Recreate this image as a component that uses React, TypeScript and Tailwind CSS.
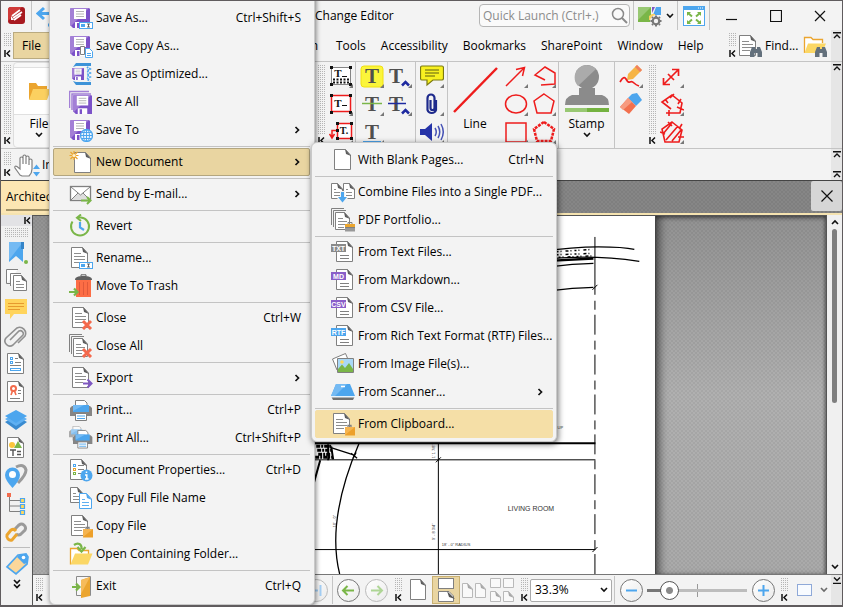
import type { ReactNode } from "react";

const GRAY = "#808080";
const BLUE = "#4da6ee";
const GREEN = "#7ab648";
const PURPLE = "#7e57c2";
const ORANGE = "#eba52f";
const RED = "#ee1c1c";

type IconProps = { children: ReactNode; w?: number; h?: number };

function Svg({ children, w = 24, h = 24 }: IconProps) {
  return (
    <svg width={w} height={h} viewBox={`0 0 ${w} ${h}`} fill="none" className="block shrink-0" aria-hidden="true">
      {children}
    </svg>
  );
}

/* ---------- shared icon parts ---------- */

function Sheet({ x = 3, y = 2, w = 16, h = 20, c = GRAY, lines = true }: { x?: number; y?: number; w?: number; h?: number; c?: string; lines?: boolean }) {
  const r = x + w;
  const b = y + h;
  return (
    <g>
      <path d={`M${x + 0.5} ${y + 0.5}H${r - 5.5}L${r - 0.5} ${y + 6}V${b - 0.5}H${x + 0.5}Z`} fill="#fff" stroke={c} strokeLinejoin="round" />
      <path d={`M${r - 6} ${y}L${r} ${y + 7}L${r - 5} ${y + 5}Z`} fill={c === GRAY ? "#5c5c5c" : c} />
      {lines && (
        <path d={`M${x + 3} ${y + 6.5}H${r - 7}M${x + 3} ${y + 9.5}H${r - 3}M${x + 3} ${y + 12.5}H${r - 3}M${x + 3} ${y + 15.5}H${r - 6}`} stroke={c} strokeWidth=".9" />
      )}
    </g>
  );
}

function Floppy({ x = 1, y = 2, s = 20 }: { x?: number; y?: number; s?: number }) {
  const k = s / 20;
  return (
    <g transform={`translate(${x} ${y}) scale(${k})`}>
      <path d="M1 0H19L20 1V20H3L0 17V1Z" fill="#7c52c8" />
      <path d="M1 0H19L1 18L0 17V1Z" fill="#a380d6" />
      <rect x="4" y="1" width="12" height="10" fill="#fff" />
      <path d="M6 3.5H14M6 6H14M6 8.500H14" stroke="#b5b5b5" />
      <rect x="5" y="14" width="10" height="6" fill="#fff" />
      <rect x="7" y="15" width="2.500" height="5" fill="#7c52c8" />
    </g>
  );
}

function Rename({ y = 16 }: { y?: number }) {
  return (
    <g>
      <rect x="10.500" y={y + 0.5} width="13" height="6" fill="#fff" stroke={BLUE} />
      <rect x="12" y={y + 2} width="4" height="3" fill={BLUE} />
      <path d={`M18 ${y + 2}h3M19.500 ${y + 2}v3M18 ${y + 5}h3`} stroke="#444" strokeWidth=".8" />
    </g>
  );
}

function Cross() {
  return <path d="M14 15L22 23M22 15L14 23" stroke="#f4694c" strokeWidth="3" />;
}

function Bag() {
  return (
    <g>
      <path d="M17 15.500V13.500H20V15.500" stroke={GRAY} strokeWidth="1.300" />
      <path d="M14 15H24V23.500H14Z" fill="#eda02a" />
      <path d="M14 15H24L14 23Z" fill="#f5b450" />
    </g>
  );
}

function Printer({ x = 1, y = 2, k = 1 }: { x?: number; y?: number; k?: number }) {
  return (
    <g transform={`translate(${x} ${y}) scale(${k})`}>
      <path d="M5.500 7V.5H14.500L17 3V7" fill="#fff" stroke={GRAY} />
      <path d="M0 8L2 6H20L22 8V16H0Z" fill="#858585" />
      <path d="M3 5H19V12H3Z" fill={BLUE} />
      <path d="M3 5H14L3 11Z" fill="#74baf3" />
      <path d="M5.500 13.500H16.500V20.500H5.500Z" fill="#fff" stroke={GRAY} />
      <path d="M7 16H15M7 18.500H15" stroke={BLUE} />
    </g>
  );
}

function Tag({ text, color }: { text: string; color: string }) {
  return (
    <Svg>
      <Sheet x={5} y={1} w={17} h={21} lines={false} />
      <path d="M9 15.500H18M9 18.500H18" stroke={GRAY} />
      <rect x="0" y="4" width="15" height="8" fill={color} />
      <text x="7.500" y="10.700" textAnchor="middle" fontSize="7" fontWeight="700" fill="#fff" fontFamily="Liberation Sans, sans-serif">
        {text}
      </text>
    </Svg>
  );
}

/* ---------- file menu icons ---------- */

const menuIcons: Record<string, ReactNode> = {
  save: <Svg><Floppy /></Svg>,
  saveAs: <Svg><Floppy /><Rename /></Svg>,
  saveCopy: (
    <Svg>
      <Floppy />
      <path d="M11.500 12.500H15.500V20.500H11.500Z" fill="#fff" stroke={GRAY} />
      <path d="M16.500 14.500H20.500L23.500 17.500V23.500H16.500Z" fill="#fff" stroke={BLUE} />
      <path d="M18 19.500H22M18 21.500H22" stroke={BLUE} />
    </Svg>
  ),
  saveOpt: (
    <Svg>
      <path d="M4 5L7 1H22V4H7Z" fill="#3d93d8" />
      <path d="M4 19L7 23H22V20H7Z" fill="#3d93d8" />
      <path d="M18 5L21 7L18 9L21 11L18 13L21 15L18 17L21 19" stroke={BLUE} strokeWidth="2" strokeDasharray="1.500 1" />
      <Floppy x={3} y={6} s={12} />
    </Svg>
  ),
  saveAll: (
    <Svg>
      <path d="M.5 18V1.500H20M3 20V4H22" stroke="#a380d6" strokeWidth="1.500" />
      <Floppy x={4} y={5} s={19} />
    </Svg>
  ),
  saveTo: (
    <Svg>
      <Floppy />
      <circle cx="17.500" cy="17.500" r="6" fill="#e8f4fd" stroke={BLUE} strokeWidth="1.300" />
      <path d="M11.500 17.500H23.500M17.500 11.500V23.500M12.500 14.500H22.500M12.500 20.500H22.500" stroke={BLUE} />
      <ellipse cx="17.500" cy="17.500" rx="3" ry="6" stroke={BLUE} />
    </Svg>
  ),
  newDoc: (
    <Svg>
      <Sheet x={5} y={2} w={17} h={21} lines={false} />
      <path d="M5 1V10M.5 5.500H9.500M1.500 2L8.500 9M8.500 2L1.500 9" stroke={ORANGE} strokeWidth="1.200" />
      <circle cx="5" cy="5.500" r="1.600" fill="#fff2cf" />
    </Svg>
  ),
  mail: (
    <Svg>
      <rect x="1.500" y="4.500" width="20" height="14" fill="#fff" stroke={GRAY} strokeWidth="1.300" />
      <path d="M2 18L9 11L11.500 13L14 11L21 18Z" fill="#ddd" />
      <path d="M2 5L11.500 13L21 5M2 18L9 11M21 18L14 11" stroke={GRAY} />
      <path d="M12 18.500H21M18 15L21.500 18.500L18 22" stroke={GREEN} strokeWidth="2" />
    </Svg>
  ),
  revert: (
    <Svg>
      <path d="M3.500 7.500A9 9 0 1 0 12 3.500H9" stroke={GREEN} strokeWidth="2" />
      <path d="M12 .5L8 3.800L12 7" stroke={GREEN} strokeWidth="2" />
      <path d="M11 8V13.500L15 16" stroke={BLUE} strokeWidth="2.200" />
    </Svg>
  ),
  rename: <Svg><Sheet x={2} y={1} w={17} h={21} /><Rename y={16} /></Svg>,
  trash: (
    <Svg>
      <path d="M7 6H22V23H7Z" fill="#fc6d45" />
      <path d="M10.500 8V21M14.500 8V21M18.500 8V21" stroke="#e0593a" />
      <path d="M6 6C6 3 9 2 14.500 2S23 3 23 6Z" fill="#5f5f5f" />
      <path d="M12 2V.8H17V2" stroke="#5f5f5f" />
      <path d="M0 18H8M5 14.500L8.500 18L5 21.500" stroke={GREEN} strokeWidth="2.200" />
    </Svg>
  ),
  close: <Svg><Sheet x={3} y={1} w={17} h={21} /><Cross /></Svg>,
  closeAll: (
    <Svg>
      <path d="M.5 18V.5H13M2.500 20V2.500H15" stroke={GRAY} />
      <Sheet x={4} y={4} w={15} h={19} />
      <Cross />
    </Svg>
  ),
  export: (
    <Svg>
      <Sheet x={3} y={1} w={17} h={21} />
      <path d="M14 17.500H22M18.500 13.500L22.500 17.500L18.500 21.500" stroke={PURPLE} strokeWidth="2" />
    </Svg>
  ),
  print: <Svg><Printer /></Svg>,
  printAll: (
    <Svg>
      <g opacity=".65"><Printer x={0} y={0} k={0.7} /></g>
      <Printer x={4} y={4} k={0.88} />
    </Svg>
  ),
  props: (
    <Svg>
      <Sheet x={1} y={1} w={17} h={21} lines={false} />
      <path d="M9 7.500H15M9 11.500H15M9 15.500H12" stroke={GRAY} />
      <rect x="4.500" y="6.500" width="2" height="2" stroke={BLUE} />
      <rect x="4.500" y="10.500" width="2" height="2" stroke={ORANGE} />
      <rect x="4.500" y="14.500" width="2" height="2" stroke={GREEN} />
      <circle cx="17.500" cy="17.500" r="6" fill={BLUE} />
      <path d="M17.500 13.500V15M16 17H17.800V21M16 21H19.500" stroke="#fff" strokeWidth="1.500" />
    </Svg>
  ),
  copyName: <Svg><Sheet x={1} y={1} w={13} h={16} /><Sheet x={10} y={7} w={13} h={16} c={BLUE} /></Svg>,
  copyFile: <Svg><Sheet x={2} y={1} w={17} h={21} /><Bag /></Svg>,
  folder: (
    <Svg>
      <path d="M1.500 22.500V6.500H8L10 8.500H19.500V13" fill="#fff" stroke={ORANGE} strokeWidth="1.300" />
      <path d="M1.500 22.500L6 11.500H23.500L19 22.500Z" fill="#fbd765" />
      <path d="M5 3C9 0 13 2 12.500 7M8.500 5L12.500 9.500L16.500 5" stroke={GREEN} strokeWidth="2.200" />
    </Svg>
  ),
  exit: (
    <Svg>
      <path d="M7.500 2.500H21.500V21.500H7.500Z" fill="#f7f7f7" stroke="#8a8a8a" />
      <path d="M12 6L21 3V22L12 24Z" fill={ORANGE} />
      <path d="M12 6L21 3L12 20Z" fill="#f6bb5a" />
      <path d="M3 13H9M7 9.500L10.500 13L7 16.500" stroke={GREEN} strokeWidth="2.200" />
    </Svg>
  ),
  blank: <Svg><Sheet x={3} y={1} w={17} h={21} lines={false} /></Svg>,
  combine: (
    <Svg>
      <Sheet x={0} y={3} w={12} h={16} />
      <Sheet x={12} y={3} w={12} h={16} />
      <path d="M11.500 11V21M8 17L11.500 20.800L15 17" stroke="#f3f3f3" strokeWidth="5" />
      <path d="M11.500 12V20" stroke={BLUE} strokeWidth="3" />
      <path d="M7 17H16L11.500 22.500Z" fill={BLUE} />
    </Svg>
  ),
  portfolio: (
    <Svg>
      <path d="M.5 17V.5H13M2.500 19V2.500H15" stroke={GRAY} />
      <Sheet x={4} y={4} w={15} h={18} />
      <rect x="14" y="16" width="10" height="7" fill={ORANGE} />
      <path d="M17 16V14.500H21V16M14 19.500H24" stroke={GRAY} />
      <rect x="14" y="20" width="10" height="3.500" fill="#999" />
    </Svg>
  ),
  txt: <Tag text="TXT" color="#8a8a8a" />,
  md: <Tag text="MD" color="#8a5fc9" />,
  csv: <Tag text="CSV" color="#8a5fc9" />,
  rtf: <Tag text="RTF" color="#4da6ee" />,
  image: (
    <Svg>
      <path d="M1.500 7L14.500 1.500L19 12L6 18Z" fill="#fff" stroke={GRAY} />
      <path d="M6.500 6.500H22.500V20.500H6.500Z" fill="#a9d8f7" stroke={GRAY} />
      <path d="M7 20V17L11 12.500L14 16L18 11L22 17V20Z" fill={GREEN} />
      <circle cx="11" cy="10" r="1.800" fill="#ffd95c" />
    </Svg>
  ),
  scanner: (
    <Svg>
      <path d="M5 4H19L24 16H0Z" fill={BLUE} />
      <path d="M5 4H16L4 16H0Z" fill="#74baf3" />
      <path d="M0 16H24L22 20H2Z" fill="#707070" />
      <path d="M0 16H24V17.500H0Z" fill="#e8f4fd" />
      <path d="M10 6.500H14" stroke="#fff" strokeWidth="1.500" />
    </Svg>
  ),
  clipboard: <Svg><Sheet x={2} y={1} w={17} h={21} /><Bag /></Svg>,
};

/* ---------- small marks ---------- */

function Pin() {
  return (
    <Svg w={7} h={7}>
      <path d="M1 0V7M6 .5L3 3.500L6 6.500" stroke="#111" strokeWidth="1.500" />
    </Svg>
  );
}

function Grip() {
  return (
    <div className="flex w-3 shrink-0 flex-col items-center gap-[3px] pt-[3px] pb-1">
      <div className="w-[9px] flex-1 bg-[conic-gradient(#b5b5b5_25%,transparent_0)] bg-[length:2px_2px]" />
      <Pin />
    </div>
  );
}

function More({ flip = false }: { flip?: boolean }) {
  return (
    <button aria-label="More" className="flex w-[11px] justify-center">
      <Svg w={8} h={7}>
        {flip ? <path d="M0 6.500H8M1 .5L4 3.500L7 .5" stroke="#111" strokeWidth="1.400" /> : <path d="M0 .7H8M1 6L4 3L7 6" stroke="#111" strokeWidth="1.400" />}
      </Svg>
    </button>
  );
}

function Overflow({ children }: { children?: ReactNode }) {
  return <div className="flex w-[11px] shrink-0 flex-col bg-[#e6e6e6] py-0.5">{children}</div>;
}

function Down() {
  return (
    <Svg w={8} h={6}>
      <path d="M1 1L4 4L7 1" stroke="#111" strokeWidth="1.600" />
    </Svg>
  );
}

function Rule() {
  return <div className="w-px shrink-0 self-stretch bg-[#c4c4c4]" />;
}

/* ---------- menus ---------- */

type Entry = { icon: string; label?: string; keys?: string; sub?: boolean; on?: boolean } | null;

const fileMenu: Entry[] = [
  { icon: "save" },
  { icon: "saveAs", label: "Save As...", keys: "Ctrl+Shift+S" },
  { icon: "saveCopy", label: "Save Copy As..." },
  { icon: "saveOpt", label: "Save as Optimized..." },
  { icon: "saveAll", label: "Save All" },
  { icon: "saveTo", label: "Save To", sub: true },
  null,
  { icon: "newDoc", label: "New Document", sub: true, on: true },
  null,
  { icon: "mail", label: "Send by E-mail...", sub: true },
  null,
  { icon: "revert", label: "Revert" },
  null,
  { icon: "rename", label: "Rename..." },
  { icon: "trash", label: "Move To Trash" },
  null,
  { icon: "close", label: "Close", keys: "Ctrl+W" },
  { icon: "closeAll", label: "Close All" },
  null,
  { icon: "export", label: "Export", sub: true },
  null,
  { icon: "print", label: "Print...", keys: "Ctrl+P" },
  { icon: "printAll", label: "Print All...", keys: "Ctrl+Shift+P" },
  null,
  { icon: "props", label: "Document Properties...", keys: "Ctrl+D" },
  { icon: "copyName", label: "Copy Full File Name" },
  { icon: "copyFile", label: "Copy File" },
  { icon: "folder", label: "Open Containing Folder..." },
  null,
  { icon: "exit", label: "Exit", keys: "Ctrl+Q" },
];

const newMenu: Entry[] = [
  { icon: "blank", label: "With Blank Pages...", keys: "Ctrl+N" },
  null,
  { icon: "combine", label: "Combine Files into a Single PDF..." },
  { icon: "portfolio", label: "PDF Portfolio..." },
  null,
  { icon: "txt", label: "From Text Files..." },
  { icon: "md", label: "From Markdown..." },
  { icon: "csv", label: "From CSV File..." },
  { icon: "rtf", label: "From Rich Text Format (RTF) Files..." },
  { icon: "image", label: "From Image File(s)..." },
  { icon: "scanner", label: "From Scanner...", sub: true },
  null,
  { icon: "clipboard", label: "From Clipboard...", on: true },
];

function MenuList({ entries, highlight }: { entries: Entry[]; highlight: string }) {
  return (
    <>
      {entries.map((e, i) =>
        e === null ? (
          <div key={i} role="separator" className="flex h-1 items-center">
            <div className="h-px w-full bg-[#c3c3c3]" />
          </div>
        ) : (
          <button
            key={i}
            role="menuitem"
            aria-label={e.label ?? "Save"}
            className={`flex h-7 w-full items-center gap-[3px] rounded-xs border pr-2 pl-[15px] text-left whitespace-nowrap ${e.on ? highlight : "border-transparent"}`}
          >
            {menuIcons[e.icon]}
            {e.label && <span className="flex-1">{e.label}</span>}
            {e.keys && <span>{e.keys}</span>}
            {e.sub && (
              <Svg w={7} h={8}>
                <path d="M1.500 1L4.500 4L1.500 7" stroke="#111" strokeWidth="1.700" />
              </Svg>
            )}
          </button>
        ),
      )}
    </>
  );
}

/* ---------- ribbon icons ---------- */

function Corner() {
  return <path d="M24 20V24H20Z" fill="#777" />;
}

function LetterT({ x = 12, y = 19, size = 21 }: { x?: number; y?: number; size?: number }) {
  return (
    <text x={x} y={y} textAnchor="middle" fontSize={size} fontWeight="700" fill="#4f4f4f" fontFamily="Liberation Serif, serif">
      T
    </text>
  );
}

const handles = <path d="M1 2h3v3h-3zM20 2h3v3h-3zM1 19h3v3h-3zM20 19h3v3h-3z" fill="#111" />;

function Tool({ label, children, corner = true }: { label: string; children: ReactNode; corner?: boolean }) {
  return (
    <button aria-label={label} className="flex h-7 w-7 items-center justify-center">
      <Svg>
        {children}
        {corner && <Corner />}
      </Svg>
    </button>
  );
}

function Column({ children }: { children: ReactNode }) {
  return <div className="flex w-7 shrink-0 flex-col">{children}</div>;
}

function Ribbon() {
  return (
    <div className="flex h-[87px] overflow-hidden border-b border-[#c4c4c4]">
      <div className="flex w-[314px] shrink-0">
        <Grip />
        <button className="flex w-[52px] flex-col items-center rounded-sm border border-[#ddd] bg-white/40">
          <span className="mt-1 flex h-12 w-full items-center justify-center border-y border-[#e0e0e0] bg-white">
            <Svg>
              <path d="M2 20V4H9L11 7H20V20Z" fill="#eba52f" />
              <path d="M2 21L6 10H24L20 21Z" fill="#fbd060" />
            </Svg>
          </span>
          <span className="mt-px">File</span>
          <Down />
        </button>
      </div>
      <Grip />
      <Column>
        <Tool label="Typewriter">
          <rect x="2.500" y="3.500" width="19" height="17" fill="#fff" stroke="#111" strokeDasharray="1 1" />
          {handles}
          <text x="9" y="13" textAnchor="middle" fontSize="11" fontWeight="700" fill="#111" fontFamily="Liberation Serif, serif">T</text>
          <path d="M13 12.500H18" stroke="#111" />
          <path d="M4 15.500H20M4 18.500H20" stroke="#111" strokeWidth="2" strokeDasharray="2 1.500" />
        </Tool>
        <Tool label="Text Box">
          <rect x="2.500" y="3.500" width="19" height="16" fill="#fff" stroke={RED} strokeWidth="1.500" />
          {handles}
          <text x="9" y="15" textAnchor="middle" fontSize="11" fontWeight="700" fill="#111" fontFamily="Liberation Serif, serif">T</text>
          <path d="M13 13.500H18" stroke="#111" />
        </Tool>
        <Tool label="Callout">
          <rect x="8.500" y="3.500" width="14" height="15" fill="#fff" stroke={RED} strokeWidth="1.500" />
          <path d="M7 2h3v3h-3zM21 2h3v3h-3zM7 17h3v3h-3zM21 17h3v3h-3zM7 9h3v3h-3z" fill="#111" />
          <text x="15" y="14" textAnchor="middle" fontSize="10" fontWeight="700" fill="#111" fontFamily="Liberation Serif, serif">T.</text>
          <path d="M7 10.500H3V17M.5 14L3 18L5.500 14" stroke={RED} strokeWidth="1.500" />
        </Tool>
      </Column>
      <Rule />
      <div className="flex w-[59px] shrink-0 justify-center">
        <Column>
          <Tool label="Highlight">
            <rect x="1" y="2" width="22" height="21" rx="3" fill="#fbf53a" stroke="#f0e010" />
            <LetterT />
          </Tool>
          <Tool label="Strikeout"><LetterT /><path d="M2 11.500H22" stroke={GREEN} strokeWidth="1.500" /></Tool>
          <Tool label="Underline"><LetterT /><path d="M3 22H21" stroke={BLUE} strokeWidth="2" /></Tool>
        </Column>
        <Column>
          <Tool label="Insert Text"><LetterT x={8} /><path d="M14 21.500L17.500 18L21 21.500" stroke="#1e2aa0" strokeWidth="2.500" /></Tool>
          <Tool label="Replace Text">
            <LetterT x={8} />
            <path d="M0 11.500H18" stroke="#1e2aa0" strokeWidth="1.500" />
            <path d="M14 21.500L17.500 18L21 21.500" stroke="#1e2aa0" strokeWidth="2.500" />
          </Tool>
        </Column>
      </div>
      <Rule />
      <div className="flex w-[31px] shrink-0 justify-center">
        <Column>
          <Tool label="Sticky Note">
            <path d="M2 2H22Q23.500 2 23.500 4V14Q23.500 16 22 16H13L7 21V16H2Q.5 16 .5 14V4Q.5 2 2 2Z" fill="#f8f020" stroke="#7b7a10" strokeWidth="1.200" />
            <path d="M5 6H19M5 9H19M5 12H15" stroke="#5f5f10" />
          </Tool>
          <Tool label="Attach File">
            <path d="M16 8V18A4.500 4.500 0 0 1 7.500 18V6A3.500 3.500 0 0 1 14.500 6V16A2 2 0 0 1 10.500 16V8" stroke="#1e2a8c" strokeWidth="2.200" />
          </Tool>
          <Tool label="Sound">
            <path d="M0 9H5L12 3V21L5 15H0Z" fill="#2634a8" />
            <path d="M15 8Q17.500 12 15 16M18 6Q21.500 12 18 18M21 4Q25.500 12 21 20" stroke="#4652b5" strokeWidth="1.500" />
          </Tool>
        </Column>
      </div>
      <Rule />
      <button className="flex w-[54px] shrink-0 flex-col items-center">
        <Svg w={48} h={54}>
          <path d="M3 50L46 6" stroke={RED} strokeWidth="2.500" />
        </Svg>
        Line
      </button>
      <Column>
        <Tool label="Arrow"><path d="M2 22L20 4M12 5.500L20.500 3.500L18.500 12" stroke={RED} strokeWidth="1.500" /></Tool>
        <Tool label="Oval"><ellipse cx="12" cy="12" rx="10.500" ry="9" stroke={RED} strokeWidth="1.500" /></Tool>
        <Tool label="Rectangle"><rect x="2" y="3" width="20" height="19" stroke={RED} strokeWidth="1.500" /></Tool>
      </Column>
      <Column>
        <Tool label="Polyline"><path d="M13 16L3 11L13 3L23 9V20L9 21" stroke={RED} strokeWidth="1.500" /></Tool>
        <Tool label="Polygon"><path d="M12 2L22 9L19 21H5L2 9Z" stroke={RED} strokeWidth="1.500" /></Tool>
        <Tool label="Cloud"><path d="M12 2L22 9L19 21H5L2 9Z" stroke={RED} strokeWidth="2.500" strokeDasharray="3 1" /></Tool>
      </Column>
      <Rule />
      <button className="flex w-[55px] shrink-0 flex-col items-center">
        <Svg w={46} h={54}>
          <circle cx="23" cy="15" r="12" fill="#8b8b8b" />
          <path d="M14 24A12 12 0 0 1 32 7Z" fill="#ababab" />
          <path d="M15 26H31V33H38Q45 35 45 43H1Q1 35 8 33H15Z" fill="#8b8b8b" />
          <rect x="1" y="46" width="44" height="4" fill="#74b240" />
          <rect x="1" y="46" width="22" height="4" fill="#98c873" />
        </Svg>
        <span>Stamp</span>
        <Down />
      </button>
      <Rule />
      <div className="flex w-[31px] shrink-0 justify-center">
        <Column>
          <Tool label="Pencil">
            <path d="M9 10L18 1L23 6L14 15L8 16Z" fill="#f6b445" />
            <path d="M18 1L23 6L21 8L16 3Z" fill="#f08060" />
            <path d="M1 18Q5 11 7 15T11 18T15 19T20 22" stroke={RED} strokeWidth="1.700" />
          </Tool>
          <Tool label="Eraser" corner={false}>
            <path d="M13 2L18 1L23 8L17 14L9 6Z" fill={BLUE} />
            <path d="M9 6L17 14L10 22L1 15Z" fill="#f2704e" />
            <path d="M9 6L13 10L4 18L1 15Z" fill="#f79b80" />
          </Tool>
        </Column>
      </div>
      <Grip />
      <Column>
        <Tool label="Distance"><path d="M3.500 20.500L18.500 5.500M3.500 14V20.500H10M12 5.500H18.500V12M8 10L14 16" stroke={RED} strokeWidth="1.700" /></Tool>
        <Tool label="Perimeter"><path d="M11 17L2 10L12 3L22 11L20 21L6 21M14 2L10 6M21 7L18 12M5 7L8 11M17 15L24 18M9 18V24" stroke={RED} strokeWidth="1.600" /></Tool>
        <Tool label="Area"><path d="M12 2L22 10L19 22H5L2 9ZM3 14L12 3M6 20L18 6M12 21L21 10M8 2L12 6M22 4L19 9M0 12L5 14M18 17L24 17" stroke={RED} strokeWidth="1.600" /></Tool>
      </Column>
      <div className="flex-1" />
      <Overflow><More /></Overflow>
    </div>
  );
}

/* ---------- side bar ---------- */

const panes: [string, ReactNode][] = [
  ["Bookmarks", <><path d="M5 2H19V22L12 16L5 22Z" fill={BLUE} /><path d="M5 2H19L5 20Z" fill="#74baf3" /><path d="M17 2H20V9H17Z" fill="#3585c8" /><circle cx="22" cy="22" r="2" fill={GREEN} /></>],
  ["Thumbnails", <><path d="M2.500 15.500V1.500H14M6.500 18V5.500H17M2.500 15.500H6" fill="#fff" stroke={GRAY} /><Sheet x={9} y={7} w={14} h={16} /></>],
  ["Comments", <><path d="M1 3H23V18H10L6 23V18H1Z" fill="#ffd45c" /><path d="M4 7.500H20M4 10.500H20M4 13.500H16" stroke="#e69a2e" /></>],
  ["Attachments", <path d="M6 15L15 6A3 3 0 0 1 19 10L9 20A5 5 0 0 1 2 13L13 3A6 6 0 0 1 21 11L14 18" transform="translate(0 1)" stroke="#909090" strokeWidth="1.600" />],
  ["Fields", <><Sheet x={3} y={1} w={17} h={21} lines={false} /><rect x="6.500" y="5.500" width="2" height="2" stroke={BLUE} /><rect x="6.500" y="9.500" width="2" height="2" stroke={BLUE} /><rect x="6.500" y="16.500" width="10" height="2" stroke={BLUE} /><path d="M11 6.500H14M11 10.500H17M6 13.500H17" stroke={GRAY} /></>],
  ["Signatures", <><Sheet x={3} y={1} w={17} h={21} lines={false} /><circle cx="9.500" cy="8.500" r="2.500" stroke="#f26b4c" strokeWidth="2" /><path d="M8.500 11L7 15M10.500 11L12 15" stroke="#f26b4c" strokeWidth="1.600" /><path d="M14 10.500H17M14 13.500H17M6 18.500H16" stroke={GRAY} /></>],
  ["Layers", <><path d="M12 8L23 14L12 22L1 14Z" fill="#3a8bd0" /><path d="M12 5L23 11L12 18L1 11Z" fill="#5fb0f2" /><path d="M12 2L23 8L12 15L1 8Z" fill={BLUE} /></>],
  ["Content", <><Sheet x={3} y={1} w={17} h={21} lines={false} /><circle cx="8" cy="9" r="3" fill="#fcc63c" /><path d="M14 5L18 12H10Z" fill={GREEN} /><path d="M6 14H12M9 14V20M13 15.500H17M13 18.500H17" stroke="#555" strokeWidth="1.400" /></>],
  ["Destinations", <><path d="M12 3Q20 -1 22 6Q22 11 14 19" stroke="#9a9a9a" strokeWidth="3" /><path d="M8.500 24Q1 16 1 11A7.500 7.500 0 0 1 16 11Q16 16 8.500 24Z" fill={BLUE} /><circle cx="8.500" cy="10.500" r="3.500" fill="#fff" /></>],
  ["Tags", <><path d="M5.500 5V19.500H17M5.500 8.500H17M5.500 14H17" stroke={GRAY} /><rect x="3" y="1" width="4" height="4" fill="#f26b4c" /><path d="M16.500 6.500h4v4h-4zM16.500 12.500h4v4h-4zM16.500 18.500h4v4h-4z" fill="#ffd95c" stroke={BLUE} strokeWidth="1.200" /></>],
  ["Links", <><path d="M11 9L15 5A4 4 0 0 1 21 10L17 14A4 4 0 0 1 12 14" stroke="#9a9a9a" strokeWidth="3" /><path d="M13 14L8 20A4 4 0 0 1 3 15L7 10A4 4 0 0 1 12 11" stroke="#eba52f" strokeWidth="3" /></>],
];

function SideBar() {
  return (
    <div className="flex w-8 shrink-0 flex-col border-r border-[#555] bg-[#f1f1f1]">
      <div className="flex h-[11px] items-center justify-end bg-[#e2e2e5] pr-px">
        <Pin />
      </div>
      <div className="mx-auto mt-0.5 h-[9px] w-[25px] bg-[conic-gradient(#b5b5b5_25%,transparent_0)] bg-[length:2px_2px]" />
      <div className="mt-px flex flex-col pr-px">
        {panes.map(([name, icon]) => (
          <button key={name} aria-label={name} className="flex h-7 items-center justify-center">
            <Svg>{icon}</Svg>
          </button>
        ))}
      </div>
      <div className="mx-0.5 mt-px h-px bg-[#bdbdbd]" />
      <button aria-label="Properties" className="mt-0.5 flex h-7 items-center justify-center">
        <Svg>
          <path d="M13 3L21 2L23 5L22 12L11 22L2 15Z" fill="#fbd79a" stroke={BLUE} strokeWidth="1.700" />
          <path d="M14 3L22 2L22 11L19 12L12 5Z" fill={BLUE} />
          <circle cx="18.500" cy="5.500" r="1.800" fill="#fff" />
        </Svg>
      </button>
      <button aria-label="More panes" className="flex h-3 items-center justify-center">
        <Svg w={8} h={10}>
          <path d="M1 1L4 4L7 1M1 5.500L4 8.500L7 5.500" stroke="#111" strokeWidth="1.700" />
        </Svg>
      </button>
    </div>
  );
}

/* ---------- document page ---------- */

function Plan() {
  return (
    <svg width="523" height="359" viewBox="133 215 523 359" fill="none" stroke="#000" className="ml-[99px] block h-full w-[523px] shrink-0 bg-white" aria-label="Floor plan">
      <path d="M540 251Q575 246 600 246T636 248.500" strokeWidth="1.200" />
      <path d="M540 259Q590 253 641 260.500" strokeWidth="1.200" />
      <path d="M550 260L595 257.500" strokeWidth="2.500" />
      <path d="M550 266Q575 263 595 262.500M550 290Q575 287 595 286.500" strokeWidth="1.300" />
      <path d="M554 251L594 248.500M554 254L594 252.500M556 256.500L594 255" strokeWidth="1.500" strokeDasharray="1 3 2 2 1 4 3 2" />
      <path d="M594 289L599 284M594 552L599 547M437 462L442 457" />
      <path d="M596.500 236V294" />
      <path d="M596.500 300V574" strokeDasharray="9 5 20 6" />
      <path d="M300 443H597" strokeWidth="2" />
      <path d="M300 459.500H597M300 549.500H597M439.500 443V574" />
      <path d="M360 443Q327 520 340.500 574" strokeWidth="1.300" />
      <path d="M331 447L356 455M352 453L358 458M357 452L354 458" strokeWidth="1.300" />
      <path d="M317 446H332M318 450H333M319 454H331M316 457H333" strokeWidth="3" strokeDasharray="4 1 2 1" />
      <path d="M329 444V460M321 460L314 485M332 446L334 459" strokeWidth="2" />
      <g stroke="none" fill="#333" fontFamily="Liberation Sans, sans-serif">
        <text x="509" y="511" fontSize="7">LIVING ROOM</text>
        <text x="443" y="546" fontSize="4">18' - 0" RADIUS</text>
        <text x="559" y="429" fontSize="4">UP</text>
        <text transform="translate(337 527) rotate(-90)" fontSize="4">10' - 0"</text>
        <text transform="translate(436 540) rotate(-90)" fontSize="4">9' - 8 3/4"</text>
        <text transform="translate(436 458) rotate(-90)" fontSize="4">1' 1 7/8"</text>
      </g>
    </svg>
  );
}

function RoundButton({ label, children, faint = false }: { label: string; children: ReactNode; faint?: boolean }) {
  return (
    <button aria-label={label} className={`flex size-[23px] shrink-0 items-center justify-center rounded-full border bg-gradient-to-br from-white to-[#ebebeb] ${faint ? "border-[#bbb]" : "border-[#777]"}`}>
      <Svg w={15} h={15}>{children}</Svg>
    </button>
  );
}

function StatusBar() {
  return (
    <div className="flex h-[31px] shrink-0 border-t border-[#777] bg-[#f3f3f3]">
      <div className="flex w-[272px] shrink-0"><Grip /></div>
      <div className="flex flex-1 items-center">
        <RoundButton label="Last page" faint>
          <path d="M3 7.500H9M11.500 2V13" stroke="#a5d0f5" strokeWidth="2" />
        </RoundButton>
        <div className="ml-1 h-7 w-px bg-[#c4c4c4]" />
        <div className="ml-1 flex gap-[5px]">
          <RoundButton label="Back"><path d="M2 7.500H13M6.500 3L2 7.500L6.500 12" stroke={GREEN} strokeWidth="2" /></RoundButton>
          <RoundButton label="Forward" faint><path d="M2 7.500H13M8.500 3L13 7.500L8.500 12" stroke="#aed595" strokeWidth="2" /></RoundButton>
        </div>
        <div className="ml-1 flex self-stretch"><Grip /></div>
        <button aria-label="Single page" className="flex w-7 justify-center"><Svg><Sheet x={4} y={1} w={16} h={21} lines={false} /></Svg></button>
        <button aria-label="Continuous" className="flex h-7 w-7 items-center justify-center border border-[#c9b071] bg-[#e9d5a1]">
          <Svg>
            <rect x="4.500" y=".5" width="15" height="10" fill="#fff" stroke={GRAY} />
            <path d="M4.500 23.500V13.500H15L19.500 18V23.500Z" fill="#fff" stroke={GRAY} />
            <path d="M13 13L21 21L15 19Z" fill="#555" />
          </Svg>
        </button>
        <button aria-label="Two pages" className="flex w-7 justify-center opacity-50">
          <Svg><Sheet x={0} y={5} w={11} h={15} lines={false} /><Sheet x={13} y={5} w={11} h={15} lines={false} /></Svg>
        </button>
        <button aria-label="Two pages continuous" className="flex w-7 justify-center opacity-50">
          <Svg>
            <path d="M.5 .5V9.500H10.500V.5ZM13.500 .5V9.500H23.500V.5Z" fill="#fff" stroke={GRAY} />
            <Sheet x={0} y={13} w={11} h={11} lines={false} /><Sheet x={13} y={13} w={11} h={11} lines={false} />
          </Svg>
        </button>
        <div className="ml-0.5 flex self-stretch"><Grip /></div>
        <div className="relative flex items-center">
          <select aria-label="Zoom" defaultValue="33.3%" className="h-[23px] w-[82px] appearance-none rounded-xs border border-[#aaa] bg-white px-1 text-xs">
            <option>33.3%</option>
          </select>
          <span className="pointer-events-none absolute right-1"><Down /></span>
        </div>
        <div className="ml-[2px] h-7 w-px bg-[#c4c4c4]" />
        <div className="ml-[5px] flex items-center gap-1">
          <RoundButton label="Zoom out"><path d="M2 7.500H13" stroke={BLUE} strokeWidth="2" /></RoundButton>
          <input
            type="range"
            aria-label="Zoom level"
            defaultValue={16}
            className="h-5 w-[101px] appearance-none bg-[linear-gradient(#777,#777),linear-gradient(#bdbdbd,#bdbdbd),linear-gradient(#999,#999)] bg-[length:22px_3px,100px_3px,1px_13px] bg-[position:0_center,0_center,50%_center] bg-no-repeat [&::-webkit-slider-thumb]:size-[19px] [&::-webkit-slider-thumb]:appearance-none [&::-webkit-slider-thumb]:rounded-full [&::-webkit-slider-thumb]:border [&::-webkit-slider-thumb]:border-[#555] [&::-webkit-slider-thumb]:bg-[radial-gradient(circle,#8a8a8a_3px,#fff_4px)]"
          />
          <RoundButton label="Zoom in"><path d="M2 7.500H13M7.500 2V13" stroke={BLUE} strokeWidth="2" /></RoundButton>
        </div>
        <div className="ml-[3px] flex self-stretch"><Grip /></div>
        <button aria-label="Fit" className="ml-[3px] flex w-6 justify-center">
          <Svg w={18} h={16}><rect x="1.500" y="2.500" width="14" height="11" fill="#f8fbff" stroke="#8fa9d8" /></Svg>
        </button>
        <button aria-label="Fit options" className="ml-[3px] flex opacity-60"><Down /></button>
      </div>
      <Overflow><More flip /></Overflow>
    </div>
  );
}

/* ---------- page ---------- */

const texture = "bg-[conic-gradient(#0000000d_25%,transparent_0_50%,#0000000d_0_75%,transparent_0)] bg-[length:4px_4px]";

export default function App() {
  return (
    <div className="relative flex h-screen w-full flex-col overflow-hidden border border-b-2 border-[#605c5e] bg-[#f3f3f3] font-['Open_Sans','Noto_Sans',sans-serif] text-xs text-black">
      <header className="flex h-[29px] shrink-0">
        <div className="flex w-[314px] shrink-0 items-center">
          <div className="flex w-[30px] justify-center">
            <Svg w={17} h={17}>
              <rect width="17" height="17" rx="3" fill="#a81a20" />
              <path d="M0 3Q0 0 3 0H14L0 14Z" fill="#cf3a38" />
              <path d="M4 9L12 3M5 11L14 5M6 13L13 8" stroke="#fff" strokeWidth="1.700" />
              <path d="M3 9L6 13L3 13Z" fill="#fff" />
            </Svg>
          </div>
          <Rule />
          <button aria-label="Undo" className="ml-1">
            <Svg>
              <path d="M2 9.500H15Q19 9.500 19 14V21H12M8 4L2 9.500L8 15" stroke={BLUE} strokeWidth="3" />
            </Svg>
          </button>
        </div>
        <h1 className="flex-1 self-center whitespace-nowrap">Change Editor</h1>
        <label className="my-[3px] mr-[3px] flex w-[151px] items-center rounded-sm border border-[#b5b5b5] bg-[#fafafa] pr-px">
          <input aria-label="Quick Launch" placeholder="Quick Launch (Ctrl+.)" className="w-0 flex-1 bg-transparent pl-[3px] text-xs outline-none placeholder:text-[#8c8c8c]" />
          <Svg w={17} h={17}>
            <circle cx="7" cy="7" r="5.500" stroke="#8a8a8a" strokeWidth="1.500" />
            <path d="M11 11L16 16" stroke="#8a8a8a" strokeWidth="2" />
          </Svg>
        </label>
        <Rule />
        <button aria-label="UI options" className="flex w-[43px] items-center justify-center gap-1">
          <Svg>
            <rect x="0" y="3" width="13" height="15" fill={GREEN} />
            <path d="M0 3H13L0 16Z" fill="#98c873" />
            <path d="M14 3H17L14 9Z" fill={PURPLE} />
            <path d="M18 3H23V11H15Z" fill={BLUE} />
            <path d="M11 12L14 10H17V16H11Z" fill="#fbd060" />
            <circle cx="18" cy="17" r="6" fill="#f3f3f3" />
            <circle cx="18" cy="17" r="3.300" stroke="#777" strokeWidth="2.200" />
            <path d="M18 11.500V13M18 21V22.500M12.500 17H14M22 17H23.500M14 13L15 14M21 20L22 21M14 21L15 20M21 14L22 13" stroke="#777" strokeWidth="2" />
          </Svg>
          <Down />
        </button>
        <Rule />
        <button aria-label="Full screen" className="flex w-[31px] items-center justify-center">
          <Svg w={22} h={20}>
            <rect x=".5" y=".5" width="21" height="19" fill="#fff" stroke={BLUE} />
            <rect width="22" height="4" fill={BLUE} />
            <path d="M15 2H16M17 2H18M19 2H20" stroke="#fff" />
            <path d="M4 10V6H8ZM18 10V6H14ZM4 14V18H8ZM18 14V18H14Z" fill={GREEN} />
            <path d="M5 7L9 10.500M17 7L13 10.500M5 17L9 13.500M17 17L13 13.500" stroke={GREEN} strokeWidth="2" />
          </Svg>
        </button>
        <Rule />
        <div className="flex w-[132px] items-center">
          {[
            ["Minimize", "M0 9.500H11"],
            ["Maximize", "M.5 .5H11.500V11.500H.5Z"],
            ["Close", "M1 1L11 11M11 1L1 11"],
          ].map(([name, d]) => (
            <button key={name} aria-label={name} className="flex h-full flex-1 items-center justify-center">
              <Svg w={12} h={12}><path d={d} stroke="#111" strokeWidth="1.200" /></Svg>
            </button>
          ))}
        </div>
      </header>

      <nav className="flex h-8 shrink-0 border-b border-[#c4c4c4]">
        <div className="flex w-[317px] shrink-0">
          <Grip />
          <button className="my-0.5 flex w-12 items-center border border-[#b9aa80] bg-[#e9d5a1] pl-2">File</button>
          <button className="ml-auto">Form</button>
        </div>
        <div className="ml-[18px] flex flex-1 items-center gap-[15px]">
          <button>Tools</button>
          <button>Accessibility</button>
          <button>Bookmarks</button>
          <button>SharePoint</button>
          <button>Window</button>
          <button>Help</button>
        </div>
        <Grip />
        <div className="flex items-center">
          <button className="flex w-[65px] items-center gap-[3px] whitespace-nowrap">
            <Svg>
              <Sheet x={1} y={1} w={17} h={21} />
              <path d="M12 23V18L14 13H17V15H19V13H22L24 18V23H19.500V19H16.500V23Z" fill="#63707c" />
            </Svg>
            Find...
          </button>
          <button aria-label="Find in folder" className="flex w-[28px]">
            <Svg>
              <path d="M1.500 19V3.500H8L10 5.500H19.500V9" fill="#fff" stroke={ORANGE} strokeWidth="1.300" />
              <path d="M1.500 19L5 9.500H23L19 19Z" fill="#fbd765" />
              <path d="M12 23V18L14 13H17V15H19V13H22L24 18V23H19.500V19H16.500V23Z" fill="#63707c" />
            </Svg>
          </button>
        </div>
        <Overflow><More /></Overflow>
      </nav>

      <Ribbon />

      <div className="flex h-8 shrink-0 border-b border-[#444]">
        <Grip />
        <button className="flex items-center gap-px">
          <Svg w={28}>
            <path d="M7 22L2 15Q1 12.500 4 13.500L7 16V5Q8.500 3 10 5V11V3Q11.500 1 13 3V11V4Q14.500 2 16 4V12V7Q17.500 5 19 7V16Q19 20 16 23H9Z" fill="#fff" stroke={GRAY} strokeWidth="1.200" />
            <path d="M20 16H27L23.500 11.500ZM20 19H27L23.500 23.500Z" fill={BLUE} />
          </Svg>
          Initial
        </button>
        <div className="flex-1" />
        <div className="flex w-[11px] flex-col justify-between bg-[#e6e6e6] py-0.5"><More /><More /></div>
      </div>

      <div className={`flex h-[34px] shrink-0 border-b-2 border-[#f5e3b0] bg-[#868686] ${texture}`}>
        <button className="relative w-[120px] bg-[#fce6b3] pl-[5px] text-left whitespace-nowrap">
          Architectural
          <span className="absolute bottom-0.5 left-[5px] h-0.5 w-[110px] bg-[#a39368]" />
        </button>
        <div className="flex-1" />
        <button aria-label="Close tab" className="mb-0.5 flex w-[31px] items-center justify-center rounded-xs bg-[#d6d6d6]">
          <Svg w={12} h={12}><path d="M.5 .5L11.500 11.500M11.500 .5L.5 11.500" stroke="#111" strokeWidth="1.200" /></Svg>
        </button>
      </div>

      <div className="flex min-h-0 flex-1">
        <SideBar />
        <div className="flex min-w-0 flex-1 flex-col">
          <div className="flex min-h-0 flex-1">
            <div className="flex min-w-0 flex-1 overflow-hidden border-t border-r border-[#555] bg-gradient-to-b from-[#929292] via-[#b0b0b0] to-[#aaa]">
              <main className={`flex min-w-0 flex-1 ${texture}`}>
                <Plan />
                <div className="flex-1 border-l border-[#444] shadow-[inset_8px_0_8px_-4px_#00000077,inset_0_3px_4px_-1px_#00000066,inset_-2px_0_3px_#00000044]" />
              </main>
            </div>
            <div className="flex w-[15px] shrink-0 flex-col items-center bg-[#f0f0f0] py-1">
              <span className="rotate-180"><Down /></span>
              <div className="mt-1 h-[174px] w-[5px] rounded-full bg-[#7f7f7f]" />
              <div className="flex-1" />
              <Down />
            </div>
          </div>
          <StatusBar />
        </div>
      </div>

      <div role="menu" aria-label="File" className="absolute bottom-0 left-12 w-[266px] rounded-md border border-[#c9c9c9] bg-[#f3f3f3] py-1 pr-1 pl-[3px] shadow-[1px_1px_5px_#00000080]">
        <MenuList entries={fileMenu} highlight="border-[#b3a67f] bg-[#e9d5a1]" />
      </div>
      <div role="menu" aria-label="New Document" className="absolute top-[141px] left-[310px] w-[246px] rounded-md border border-[#c9c9c9] bg-[#f3f3f3] px-[3px] py-[3px] shadow-[1px_2px_6px_#00000099]">
        <MenuList entries={newMenu} highlight="border-[#f5dfa7] bg-[#f5dfa7]" />
      </div>
    </div>
  );
}
